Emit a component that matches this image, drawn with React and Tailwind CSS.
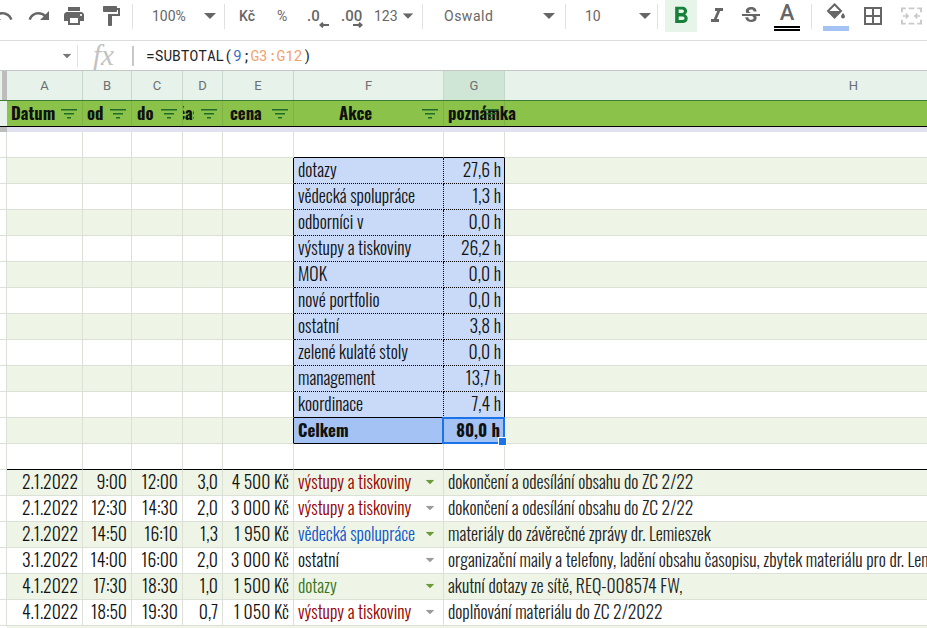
import { MdUndo, MdRedo, MdPrint, MdFormatPaint, MdFormatBold, MdFormatItalic, MdStrikethroughS, MdBorderAll } from "react-icons/md";

const GRID = "grid grid-cols-[7px_76px_49px_51px_40px_71px_150px_61px_698px]";

function Caret({ className = "" }) {
  return (
    <svg width="12" height="6" viewBox="0 0 12 6" className={"block shrink-0 " + className}>
      <polygon points="0,0 12,0 6,6" fill="currentColor" />
    </svg>
  );
}

function Sep({ className = "" }) {
  return <div className={"h-[25px] w-px shrink-0 bg-[#dfe1e5] " + className} />;
}

function Merge() {
  return (
    <svg width="21" height="18" viewBox="0 0 22 18" className="ml-[16px] shrink-0 text-[#c9c9c9]" fill="none" stroke="currentColor" strokeWidth="2">
      <path d="M1 5V1h4M8 1h6M17 1h4v4M1 13v4h4M8 17h6M17 17h4v-4" />
      <path d="M2 9h5M5 6.500 7.500 9 5 11.500M20 9h-5M17 6.500 14.500 9l2.500 2.500" strokeWidth="1.600" />
    </svg>
  );
}

function Toolbar() {
  return (
    <div className="h-[41px] shrink-0 border-b border-[#dadce0] bg-white [font-family:Roboto,sans-serif] text-[14px] text-[#666]">
      <div className="flex h-[32px] items-center overflow-hidden">
        <MdUndo size={24} className="-ml-[10px] shrink-0" />
        <MdRedo size={24} className="ml-[13px] shrink-0" />
        <MdPrint size={24} className="ml-[11px] shrink-0" />
        <MdFormatPaint size={24} className="ml-[13px] shrink-0" />
        <Sep className="ml-[9px]" />
        <span className="ml-[19px] w-[36px] shrink-0">100%</span>
        <Caret className="ml-[16px]" />
        <Sep className="ml-[8px]" />
        <span className="ml-[14px] w-[19px] shrink-0 font-medium">Kč</span>
        <span className="ml-[19px] w-[12px] shrink-0">%</span>
        <div className="relative ml-[18px] h-[24px] w-[22px] shrink-0">
          <span className="absolute left-0 top-[1px] text-[15px] font-medium">.0</span>
          <svg width="10" height="6" viewBox="0 0 10 6" className="absolute left-[12px] top-[18px]" fill="none" stroke="currentColor" strokeWidth="2"><path d="M10 3H2M4 .7 1.500 3 4 5.300" /></svg>
        </div>
        <div className="relative ml-[12px] h-[24px] w-[24px] shrink-0">
          <span className="absolute left-0 top-[1px] text-[15px] font-medium">.00</span>
          <svg width="10" height="6" viewBox="0 0 10 6" className="absolute left-[12px] top-[18px]" fill="none" stroke="currentColor" strokeWidth="2"><path d="M0 3h8M6 .7 8.500 3 6 5.300" /></svg>
        </div>
        <span className="ml-[9px] w-[26px] shrink-0">123</span>
        <Caret className="ml-[2px] scale-90" />
        <Sep className="ml-[8px]" />
        <span className="ml-[21px] w-[50px] shrink-0 tracking-[0.5px]">Oswald</span>
        <Caret className="ml-[49px]" />
        <Sep className="ml-[10px]" />
        <span className="ml-[19px] w-[16px] shrink-0">10</span>
        <Caret className="ml-[38px]" />
        <Sep className="ml-[6px]" />
        <div className="ml-[7px] flex h-[32px] w-[32px] shrink-0 items-center justify-center bg-[#e6f4ea] text-[#188038]">
          <MdFormatBold size={28} />
        </div>
        <MdFormatItalic size={24} className="ml-[8px] shrink-0" />
        <MdStrikethroughS size={24} className="ml-[10px] shrink-0" />
        <div className="ml-[11px] flex w-[26px] shrink-0 flex-col items-center">
          <span className="h-[22px] text-[22px] font-medium leading-[22px]">A</span>
          <div className="mt-[2px] h-[5px] w-[26px] border-y-2 border-black" />
        </div>
        <Sep className="ml-[11px]" />
        <div className="ml-[11px] flex w-[26px] shrink-0 flex-col items-center">
          <svg width="20" height="20" viewBox="0 0 20 20" className="block">
            <path d="M8 1.500 9.200 3 15 9l-6.500 6.500L2 9 8 3" fill="none" stroke="currentColor" strokeWidth="2" />
            <path d="M3 9h12l-6.500 6.500z" fill="currentColor" />
            <path d="M17 11s-2 2.200-2 3.500a2 2 0 0 0 4 0c0-1.300-2-3.500-2-3.500z" fill="currentColor" />
          </svg>
          <div className="mt-[4px] h-[5px] w-[26px] bg-[#a4c2f4]" />
        </div>
        <MdBorderAll size={24} className="ml-[12px] shrink-0" />
        <Merge />
      </div>
    </div>
  );
}

function FormulaBar() {
  return (
    <div className="flex h-[30px] shrink-0 items-center border-b border-[#c4c7c5] bg-white">
      <Caret className="ml-[61px] scale-75 text-[#777]" />
      <div className="ml-[4px] h-[22px] w-px bg-[#dfe1e5]" />
      <span className="ml-[15px] w-[24px] [font-family:'Liberation_Serif',serif] text-[29px] italic leading-none text-[#c2c2c2]">fx</span>
      <div className="ml-[15px] h-[20px] w-[2px] bg-[#c7c7c7]" />
      <span className="ml-[12px] [font-family:'Roboto_Mono','DejaVu_Sans_Mono',monospace] text-[14.500px] text-[#222]">
        =SUBTOTAL(<span className="text-[#3d6fc4]">9</span>;<span className="text-[#f4a06a]">G3:G12</span>)
      </span>
    </div>
  );
}

function ColumnHeaders() {
  const cols = ["A", "B", "C", "D", "E", "F", "G", "H"];
  return (
    <div className={GRID + " h-[29px] shrink-0 bg-[#e6f2ea] [font-family:Roboto,sans-serif] text-[13px] text-[#6b6f72]"}>
      <div className="ml-[2px] bg-[#bdbdbd]" />
      {cols.map((c) => (
        <div key={c} className={"flex items-center justify-center border-r border-[#c6d8cd] " + (c === "G" ? "bg-[#cfe6d6]" : "")}>{c}</div>
      ))}
    </div>
  );
}

function Filter() {
  return (
    <svg width="16" height="10" viewBox="0 0 16 10" className="absolute right-[5px] top-[8px] text-[#1f6b2a]" fill="currentColor">
      <rect x="0" y="0" width="16" height="1.500" />
      <rect x="3" y="4" width="10" height="1.500" />
      <rect x="6" y="8" width="4" height="1.500" />
    </svg>
  );
}

function HeadCell({ children, className = "" }) {
  return (
    <div className={"relative flex items-center whitespace-nowrap border-r border-[#7fb146] bg-[#8bc34a] " + className}>
      {children}
      <Filter />
    </div>
  );
}

function HeaderRow() {
  return (
    <div className={GRID + " h-[27px] shrink-0 border-b border-t border-b-black border-t-[#3f7d33] [font-family:Oswald,sans-serif] text-[16.700px] font-bold leading-none text-[#111]"}>
      <div className="bg-[#e6f2ea]" />
      <HeadCell className="pl-[4px]">Datum</HeadCell>
      <HeadCell className="pl-[4px]">od</HeadCell>
      <HeadCell className="pl-[5px]">do</HeadCell>
      <HeadCell>
        <div className="flex w-[11px] justify-center overflow-hidden">čas</div>
      </HeadCell>
      <HeadCell className="pl-[7px]">cena</HeadCell>
      <HeadCell className="justify-center pr-[26px]">Akce</HeadCell>
      <HeadCell className="z-10 pl-[4px]">poznámka</HeadCell>
      <div className="bg-[#8bc34a]" />
    </div>
  );
}

function Divider() {
  return (
    <div className="grid h-[5px] shrink-0 grid-cols-[7px_1fr]">
      <div className="bg-[#bdbdbd]" />
      <div className="bg-[#e0e0ee]" />
    </div>
  );
}

const summary = [
  ["dotazy", "27,6 h"],
  ["vědecká spolupráce", "1,3 h"],
  ["odborníci v", "0,0 h"],
  ["výstupy a tiskoviny", "26,2 h"],
  ["MOK", "0,0 h"],
  ["nové portfolio", "0,0 h"],
  ["ostatní", "3,8 h"],
  ["zelené kulaté stoly", "0,0 h"],
  ["management", "13,7 h"],
  ["koordinace", "7,4 h"],
];

const data = [
  ["2.1.2022", "9:00", "12:00", "3,0", "4 500 Kč", "výstupy a tiskoviny", "text-[#980000]", "dokončení a odesílání obsahu do ZC 2/22"],
  ["2.1.2022", "12:30", "14:30", "2,0", "3 000 Kč", "výstupy a tiskoviny", "text-[#980000]", "dokončení a odesílání obsahu do ZC 2/22"],
  ["2.1.2022", "14:50", "16:10", "1,3", "1 950 Kč", "vědecká spolupráce", "text-[#1155cc]", "materiály do závěrečné zprávy dr. Lemieszek"],
  ["3.1.2022", "14:00", "16:00", "2,0", "3 000 Kč", "ostatní", "text-[#111]", "organizační maily a telefony, ladění obsahu časopisu, zbytek materiálu pro dr. Lemieszek"],
  ["4.1.2022", "17:30", "18:30", "1,0", "1 500 Kč", "dotazy", "text-[#38761d]", "akutní dotazy ze sítě, REQ-008574 FW,"],
  ["4.1.2022", "18:50", "19:30", "0,7", "1 050 Kč", "výstupy a tiskoviny", "text-[#980000]", "doplňování materiálu do ZC 2/2022"],
];

const LINE = "border-r border-b border-[#dce1d7]";

function Row({ tint, children }) {
  return (
    <div className={GRID + " h-[26px] shrink-0 " + (tint ? "bg-[#eef5e6]" : "bg-white")}>
      <div className={"bg-white " + LINE} />
      {children}
    </div>
  );
}

function Blank({ n }) {
  return Array.from({ length: n }).map((_, i) => <div key={i} className={LINE} />);
}

function TopRow() {
  return (
    <Row>
      <Blank n={5} />
      <div className={LINE + " border-b-black"} />
      <div className={LINE + " border-b-black"} />
      <div className="border-b border-[#dce1d7]" />
    </Row>
  );
}

function GapRow() {
  const cell = LINE + " border-b-black";
  return (
    <Row>
      <div className={cell} />
      <div className={cell} />
      <div className={cell} />
      <div className={cell} />
      <div className={cell} />
      <div className={cell} />
      <div className={cell} />
      <div className="border-b border-black" />
    </Row>
  );
}

function SummaryRow({ tint, label, value }) {
  return (
    <Row tint={tint}>
      <Blank n={4} />
      <div className={LINE + " border-r-black"} />
      <div className="flex items-center border-b border-r border-dotted border-black bg-[#c9daf8] pb-[2px] pl-[4px]">
        {label}
      </div>
      <div className="flex items-center justify-end border-b border-dotted border-b-black bg-[#c9daf8] pb-[2px] pr-[4px] shadow-[inset_-1px_0_0_#000]">
        {value}
      </div>
      <div className="border-b border-[#dce1d7]" />
    </Row>
  );
}

function TotalRow() {
  return (
    <Row tint>
      <Blank n={4} />
      <div className={LINE + " border-r-black"} />
      <div className="-mt-px flex items-center border-b border-t border-black bg-[#a4c2f4] pl-[4px] text-[16.700px] font-bold">Celkem</div>
      <div className="relative -mt-px flex items-center justify-end border-b border-r border-t border-black bg-[#a4c2f4] pr-[4px] text-[16.700px] font-bold">
        80,0 h
        <div className="absolute -bottom-px -left-[2px] -right-px -top-px border-2 border-[#1a73e8]" />
        <div className="absolute -bottom-[3px] -right-[3px] z-10 h-[9px] w-[9px] border border-white bg-[#1a73e8]" />
      </div>
      <div className="border-b border-[#dce1d7]" />
    </Row>
  );
}

function DataRow({ tint, r }) {
  const num = "flex items-center justify-end pb-[2px] pr-[4px] " + LINE;
  return (
    <Row tint={tint}>
      <div className={num}>{r[0]}</div>
      <div className={num}>{r[1]}</div>
      <div className={num}>{r[2]}</div>
      <div className={num}>{r[3]}</div>
      <div className={num}>{r[4]}</div>
      <div className={"flex items-center justify-between whitespace-nowrap pb-[2px] pl-[4px] pr-[7px] " + LINE}>
        <span className={r[6]}>{r[5]}</span>
        <Caret className={"scale-75 " + (tint ? "text-[#6b9a3a]" : "text-[#9a9a9a]")} />
      </div>
      <div className="col-span-2 flex items-center whitespace-nowrap border-b border-[#dce1d7] pb-[2px] pl-[4px] text-[#222]">{r[7]}</div>
    </Row>
  );
}

export default function App() {
  return (
    <div className="flex h-[628px] w-[927px] flex-col overflow-hidden bg-white">
      <Toolbar />
      <FormulaBar />
      <ColumnHeaders />
      <HeaderRow />
      <Divider />
      <div className="[font-family:Oswald,sans-serif] text-[17.700px] font-light leading-none text-[#111]">
        <TopRow />
        {summary.map((s, i) => (
          <SummaryRow key={s[0]} tint={i % 2 === 0} label={s[0]} value={s[1]} />
        ))}
        <TotalRow />
        <GapRow />
        {data.map((r, i) => (
          <DataRow key={i} tint={i % 2 === 0} r={r} />
        ))}
        <div className="ml-[7px] h-[2px] bg-[#eef5e6]" />
      </div>
    </div>
  );
}
